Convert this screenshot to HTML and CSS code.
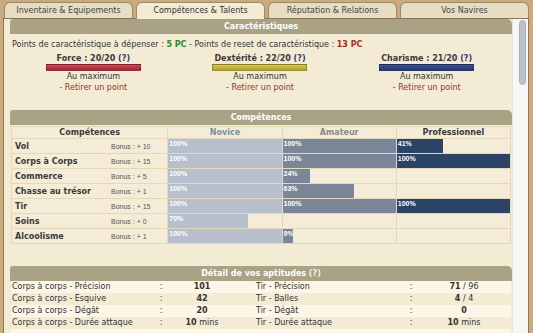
FILE: index.html
```html
<!DOCTYPE html>
<html lang="fr">
<head>
<meta charset="utf-8">
<title>Compétences &amp; Talents</title>
<link rel="stylesheet" href="styles.css">
</head>
<body>
<div class="tabs">
  <div class="tab">Inventaire &amp; Equipements</div>
  <div class="tab active">Compétences &amp; Talents</div>
  <div class="tab">Réputation &amp; Relations</div>
  <div class="tab">Vos Navires</div>
</div>
<div class="panel">
  <div class="content">
    <div class="sect-head">Caractéristiques</div>
    <p class="points">Points de caractéristique à dépenser : <b class="green">5 PC</b> - Points de reset de caractéristique : <b class="red">13 PC</b></p>
    <div class="stats">
      <div class="stat">
        <div class="stat-title">Force : 20/20 <span class="help">(?)</span></div>
        <div class="stat-bar force"></div>
        <div class="line">Au maximum</div>
        <div class="line retire">- Retirer un point</div>
      </div>
      <div class="stat">
        <div class="stat-title">Dextérité : 22/20 <span class="help">(?)</span></div>
        <div class="stat-bar dex"></div>
        <div class="line">Au maximum</div>
        <div class="line retire">- Retirer un point</div>
      </div>
      <div class="stat">
        <div class="stat-title">Charisme : 21/20 <span class="help">(?)</span></div>
        <div class="stat-bar cha"></div>
        <div class="line">Au maximum</div>
        <div class="line retire">- Retirer un point</div>
      </div>
    </div>

    <div class="sect-head gap">Compétences</div>
    <table class="skills">
      <colgroup><col class="c-name"><col class="c-lvl"><col class="c-lvl"><col class="c-lvl"></colgroup>
      <thead>
        <tr><th>Compétences</th><th class="novice">Novice</th><th class="amateur">Amateur</th><th class="pro">Professionnel</th></tr>
      </thead>
      <tbody>
        <tr><td><div class="sk"><span class="sk-name">Vol</span><span class="bonus">Bonus : + 10</span></div></td>
          <td><div class="bar b1" style="width:100%">100%</div></td><td><div class="bar b2" style="width:100%">100%</div></td><td><div class="bar b3" style="width:41%">41%</div></td></tr>
        <tr><td><div class="sk"><span class="sk-name">Corps à Corps</span><span class="bonus">Bonus : + 15</span></div></td>
          <td><div class="bar b1" style="width:100%">100%</div></td><td><div class="bar b2" style="width:100%">100%</div></td><td><div class="bar b3" style="width:100%">100%</div></td></tr>
        <tr><td><div class="sk"><span class="sk-name">Commerce</span><span class="bonus">Bonus : + 5</span></div></td>
          <td><div class="bar b1" style="width:100%">100%</div></td><td><div class="bar b2" style="width:24%">24%</div></td><td></td></tr>
        <tr><td><div class="sk"><span class="sk-name">Chasse au trésor</span><span class="bonus">Bonus : + 1</span></div></td>
          <td><div class="bar b1" style="width:100%">100%</div></td><td><div class="bar b2" style="width:63%">63%</div></td><td></td></tr>
        <tr><td><div class="sk"><span class="sk-name">Tir</span><span class="bonus">Bonus : + 15</span></div></td>
          <td><div class="bar b1" style="width:100%">100%</div></td><td><div class="bar b2" style="width:100%">100%</div></td><td><div class="bar b3" style="width:100%">100%</div></td></tr>
        <tr><td><div class="sk"><span class="sk-name">Soins</span><span class="bonus">Bonus : + 0</span></div></td>
          <td><div class="bar b1" style="width:70%">70%</div></td><td></td><td></td></tr>
        <tr><td><div class="sk"><span class="sk-name">Alcoolisme</span><span class="bonus">Bonus : + 1</span></div></td>
          <td><div class="bar b1" style="width:100%">100%</div></td><td><div class="bar b2" style="width:9%">9%</div></td><td></td></tr>
      </tbody>
    </table>

    <div class="sect-head gap2">Détail de vos aptitudes <span class="help-w">(?)</span></div>
    <div class="detail">
      <div class="drow">
        <span>Corps à corps - Précision</span><span class="colon">:</span><span class="val"><b>101</b></span><span></span>
        <span>Tir - Précision</span><span class="colon">:</span><span class="val"><b>71</b> / 96</span>
      </div>
      <div class="drow">
        <span>Corps à corps - Esquive</span><span class="colon">:</span><span class="val"><b>42</b></span><span></span>
        <span>Tir - Balles</span><span class="colon">:</span><span class="val"><b>4</b> / 4</span>
      </div>
      <div class="drow">
        <span>Corps à corps - Dégât</span><span class="colon">:</span><span class="val"><b>20</b></span><span></span>
        <span>Tir - Dégât</span><span class="colon">:</span><span class="val"><b>0</b></span>
      </div>
      <div class="drow">
        <span>Corps à corps - Durée attaque</span><span class="colon">:</span><span class="val"><b>10</b> mins</span><span></span>
        <span>Tir - Durée attaque</span><span class="colon">:</span><span class="val"><b>10</b> mins</span>
      </div>
      <div class="drow">
        <span></span><span></span><span></span><span></span><span></span><span></span><span></span>
      </div>
    </div>
  </div>
  <div class="scrollbar"><div class="thumb"></div></div>
</div>
</body>
</html>
```

FILE: styles.css
```css
* { box-sizing: border-box; }
html, body { margin: 0; padding: 0; }
body {
  background: #c9ab7f;
  font-family: "DejaVu Sans", Verdana, sans-serif;
  font-size: 8px;
  color: #333;
  width: 533px;
  height: 333px;
  overflow: hidden;
}
b { font-weight: bold; }

.tabs {
  display: flex;
  gap: 3px;
  padding: 2px 0 0 4px;
  height: 18px;
  position: relative;
  z-index: 2;
}
.tab {
  width: 129px;
  height: 16px;
  border: 1px solid #9c8a68;
  border-bottom: none;
  border-radius: 6px 6px 0 0;
  background: #e7ddc3;
  text-align: center;
  line-height: 15px;
  color: #444;
}
.tab.active {
  background: #f3ebd3;
  height: 17px;
  color: #333;
}

.panel {
  display: flex;
  margin-left: 3px;
  width: 526px;
  height: 330px;
  border: 1px solid #8a7656;
  background: #f3ebd3;
}
.content {
  flex: 1;
  padding-left: 6px;
}
.scrollbar {
  width: 16px;
  background: #f7f7f5;
  border-left: 1px solid #e4e2dc;
  padding: 1px 0 0 6px;
}
.thumb {
  width: 7px;
  height: 65px;
  border-radius: 4px;
  background: #bcc2cc;
  border: 1px solid #a9afba;
}

.sect-head {
  height: 15px;
  background: #aaa285;
  color: #fff;
  font-weight: bold;
  text-align: center;
  line-height: 15px;
  border-radius: 3px 5px 0 0;
}
.sect-head.gap { margin-top: 17px; }
.sect-head.gap2 { margin-top: 22px; }
.help-w { color: #f4f0e4; }

.points {
  margin: 5px 0 0 2px;
  line-height: 12px;
}
.green { color: #2b8a2b; }
.red { color: #a52a22; }

.stats {
  display: grid;
  grid-template-columns: repeat(3, 1fr);
  width: 500px;
  margin-top: 2px;
  text-align: center;
}
.stat-title {
  font-weight: bold;
  line-height: 10px;
  height: 10px;
  margin-top: 1px;
  color: #3a3a3a;
}
.help { color: #2c3f6c; }
.stat-bar {
  width: 95px;
  height: 7px;
  margin: 0 auto 0;
  border: 1px solid rgba(0,0,0,0.25);
}
.stat-bar.force { background: linear-gradient(#c8505a, #a52030); }
.stat-bar.dex { background: linear-gradient(#d6c850, #b3a22a); }
.stat-bar.cha { background: linear-gradient(#3d5393, #263872); }
.line { line-height: 11px; }
.retire { color: #a32e2a; }

.skills {
  margin: 1px 0 0 1px;
  width: 500px;
  table-layout: fixed;
  border-collapse: collapse;
  background: #f4ecd6;
}
.c-name { width: 156px; }
.c-lvl { width: 114px; }
.skills th, .skills td {
  box-sizing: content-box;
  border: 1px solid #e2d8ba;
  padding: 0;
}
.skills th {
  height: 11px;
  line-height: 11px;
  font-weight: bold;
  text-align: center;
  color: #3a3a3a;
}
.skills th.novice { color: #7f8b9c; }
.skills th.amateur { color: #8a8a88; }
.skills th.pro { color: #3a3a3a; }
.skills td { height: 14px; vertical-align: top; }
.sk {
  display: flex;
  align-items: center;
  height: 14px;
  padding-left: 3px;
}
.sk-name {
  width: 96px;
  font-weight: bold;
  color: #3a3a3a;
}
.bonus {
  font-family: "Liberation Sans", Arial, sans-serif;
  font-size: 7px;
  color: #555;
}
.bar {
  height: 14px;
  font-family: "Liberation Sans", Arial, sans-serif;
  font-size: 7px;
  font-weight: bold;
  color: #fff;
  line-height: 9px;
  padding-left: 1px;
  overflow: hidden;
  white-space: nowrap;
}
.b1 { background: #b7bfcc; }
.b2 { background: #7b8699; }
.b3 { background: #2b4466; }

.detail {
  width: 500px;
  margin-left: 1px;
}
.drow {
  display: grid;
  grid-template-columns: 144px 10px 72px 18px 150px 10px 96px;
  height: 12px;
  line-height: 12px;
  padding-left: 1px;
}
.drow:nth-child(odd) { background: #fbf6e6; }
.colon, .val { text-align: center; }
```
